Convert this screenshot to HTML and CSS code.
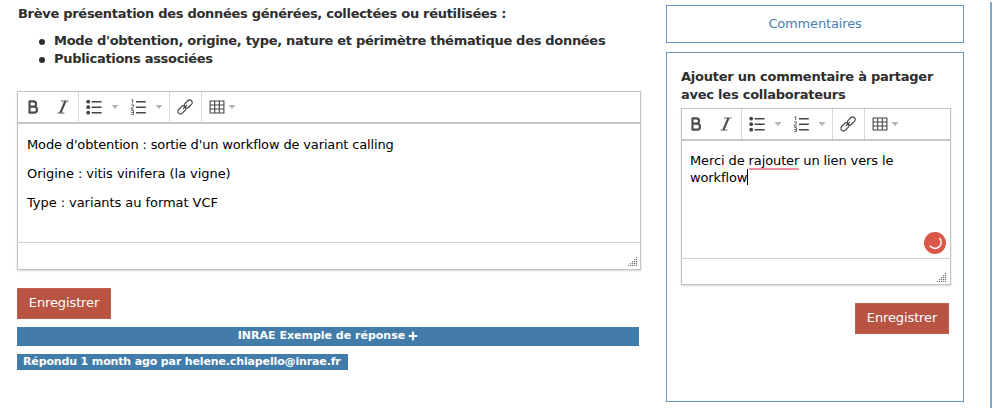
FILE: index.html
```
<!DOCTYPE html>
<html lang="fr">
<head>
<meta charset="utf-8">
<title>Plan de gestion de données</title>
<link rel="stylesheet" href="styles.css">
</head>
<body>
<svg width="0" height="0" class="defs">
  <defs>
    <symbol id="bold" viewBox="0 0 16 16"><path d="M4.5 1.4v13.2M4.5 2.4h4a2.6 2.6 0 0 1 0 5.2h-4M4.5 7.8h4.6a2.9 2.9 0 0 1 0 5.8H4.5" fill="none" stroke="#4a4a4a" stroke-width="2.1"/></symbol>
    <symbol id="italic" viewBox="0 0 16 16"><path d="M5.9 2h7.6M2.4 14h7" fill="none" stroke="#666" stroke-width="1"/><path d="M10.5 2L5.3 14" fill="none" stroke="#4a4a4a" stroke-width="2.1"/></symbol>
    <symbol id="bullets" viewBox="0 0 16 16"><g fill="#444"><circle cx="2.2" cy="2.7" r="1.9"/><circle cx="2.2" cy="8.2" r="1.9"/><circle cx="2.2" cy="13.7" r="1.9"/></g><path d="M5.6 2.7h10M5.6 8.2h10M5.6 13.7h10" stroke="#444" stroke-width="1.6"/></symbol>
    <symbol id="numbers" viewBox="0 0 16 16"><path d="M6 2.7h9.8M6 8.2h9.8M6 13.7h9.8" stroke="#444" stroke-width="1.6"/><path d="M1.5 1.2l1.2-.7v3.7M1.2 5.9h2.2v1.7l-2 1.3v1.2h2.4M1.2 11.6h2.3v3.8H1.2M1.4 13.5h2" fill="none" stroke="#555" stroke-width=".9"/></symbol>
    <symbol id="link" viewBox="0 0 16 16"><g fill="none" stroke="#444" stroke-width="1.2"><rect x="-4.6" y="-2.6" width="9.2" height="5.2" rx="2.6" transform="translate(4.9 10.9) rotate(-45)"/><rect x="-4.6" y="-2.6" width="9.2" height="5.2" rx="2.6" transform="translate(11.2 5) rotate(-45)"/><path d="M6 9.9l4-4"/></g></symbol>
    <symbol id="table" viewBox="0 0 16 16"><path d="M1.1 2h13.8v12H1.1zM1 6h14M1 10h14M5.7 2v12M10.3 2v12" fill="none" stroke="#444" stroke-width="1.1"/></symbol>
    <symbol id="caret" viewBox="0 0 8 4"><path d="M.5 0h7L4 4z" fill="#b0b6ba"/></symbol>
    <symbol id="grip" viewBox="0 0 10 10"><path d="M8.5 1v9M6.5 3v7M4.5 5v5M2.5 7v3M.5 9v1" fill="none" stroke="#777" stroke-width="1.2" stroke-dasharray="1.2 .8"/></symbol>
  </defs>
</svg>
<div class="page">
  <main class="answer">
    <p class="question">Brève présentation des données générées, collectées ou réutilisées :</p>
    <ul class="points">
      <li>Mode d'obtention, origine, type, nature et périmètre thématique des données</li>
      <li>Publications associées</li>
    </ul>
    <div class="editor">
      <div class="toolbar">
        <div class="group g1"><svg class="icon"><use href="#bold"/></svg><svg class="icon"><use href="#italic"/></svg></div>
        <div class="group g2"><svg class="icon"><use href="#bullets"/></svg><svg class="caret"><use href="#caret"/></svg><svg class="icon"><use href="#numbers"/></svg><svg class="caret"><use href="#caret"/></svg></div>
        <div class="group g3"><svg class="icon"><use href="#link"/></svg></div>
        <div class="group g4"><svg class="icon"><use href="#table"/></svg><svg class="caret"><use href="#caret"/></svg></div>
      </div>
      <div class="content">
        <p class="first">Mode d'obtention : sortie d'un workflow de variant calling</p>
        <p>Origine : vitis vinifera (la vigne)</p>
        <p>Type : variants au format VCF</p>
      </div>
      <div class="status"><svg class="grip"><use href="#grip"/></svg></div>
    </div>
    <button class="save">Enregistrer</button>
    <div class="example"><span>INRAE Exemple de réponse</span><svg class="plus" viewBox="0 0 10 10"><path d="M5 .8v8.4M.8 5h8.4" stroke="#fff" stroke-width="2.2"/></svg></div>
    <div class="answered">Répondu 1 month ago par helene.chiapello@inrae.fr</div>
  </main>
  <aside class="side">
    <div class="tab">Commentaires</div>
    <section class="panel">
      <h2>Ajouter un commentaire à partager<br>avec les collaborateurs</h2>
      <div class="editor small">
        <div class="toolbar">
          <div class="group g1"><svg class="icon"><use href="#bold"/></svg><svg class="icon"><use href="#italic"/></svg></div>
          <div class="group g2"><svg class="icon"><use href="#bullets"/></svg><svg class="caret"><use href="#caret"/></svg><svg class="icon"><use href="#numbers"/></svg><svg class="caret"><use href="#caret"/></svg></div>
          <div class="group g3"><svg class="icon"><use href="#link"/></svg></div>
          <div class="group g4"><svg class="icon"><use href="#table"/></svg><svg class="caret"><use href="#caret"/></svg></div>
        </div>
        <div class="content">
          <p>Merci de <span class="typo">rajouter</span> un lien vers le<br>workflow<i class="cursor"></i></p>
          <svg class="checker" viewBox="0 0 22 22"><circle cx="11" cy="11" r="11" fill="#db574a"/><path d="M15.9 6.5A6 6 0 0 1 6.2 14" fill="none" stroke="#fff" stroke-width="1.5" stroke-linecap="round"/></svg>
        </div>
        <div class="status"><svg class="grip"><use href="#grip"/></svg></div>
      </div>
      <button class="save">Enregistrer</button>
    </section>
  </aside>
  <div class="rule"></div>
</div>
</body>
</html>
```
FILE: styles.css
```
* { box-sizing: border-box; }
body { margin: 0; height: 408px; overflow: hidden; background: #fff; color: #2e2e2e; font: 13px/18px Verdana, "DejaVu Sans", sans-serif; }
.defs { display: block; }
svg { display: block; flex: none; }
p, ul, h2 { margin: 0; padding: 0; }
.page { display: grid; grid-template-columns: 624px 349px 2px; padding-left: 17px; height: 408px; }
.side { margin-left: 25px; width: 298px; }
.rule { background: #7fa8ca; margin-top: 2px; }
.answer { display: flex; flex-direction: column; align-items: flex-start; }
.question { font-weight: bold; padding: 5px 0 0 1px; white-space: nowrap; letter-spacing: -.29px; }
.points { list-style: none; margin-top: 9px; font-weight: bold; white-space: nowrap; letter-spacing: -.3px; }
.points li { display: flex; align-items: center; height: 18px; }
.points li::before { content: ""; width: 6px; height: 6px; border-radius: 50%; background: #2e2e2e; margin: 1px 9px 0 22px; }
.editor { display: flex; flex-direction: column; width: 624px; height: 179px; margin-top: 23px; border: 1px solid #c3c3c3; box-shadow: 0 1px 2px rgba(0,0,0,.18); background: #fff; }
.toolbar { display: flex; height: 32px; border-bottom: 2px solid #c6c6c6; }
.group { display: flex; align-items: center; border-right: 1px solid #d9d9d9; padding-left: 7px; }
.g1 { width: 61px; gap: 14px; }
.g2 { width: 91px; }
.g3 { width: 32px; padding-left: 7px; }
.g4 { border: 0; padding-left: 7px; }
.icon { width: 16px; height: 16px; }
.caret { width: 8px; height: 4px; }
.g2 .caret { margin: 0 11px 0 9px; }
.g4 .caret { margin-left: 3px; }
.content { flex: 1; padding: 12px 8px 0 9px; color: #000; position: relative; white-space: nowrap; letter-spacing: -.06px; }
.content p { margin-bottom: 11px; }
.content .first { letter-spacing: -.145px; }
.status { display: flex; justify-content: flex-end; align-items: flex-end; height: 27px; border-top: 1px solid #d0d0d0; padding: 0 2px 3px 0; }
.grip { width: 10px; height: 10px; }
.save { font: inherit; letter-spacing: -.12px; width: 94px; height: 31px; border: 1px solid #c1604e; background: #b85441; color: #fff; padding: 0 0 1px; margin-top: 18px; }
.example { display: flex; justify-content: center; align-items: center; gap: 3px; width: 622px; height: 19px; margin-top: 8px; padding-bottom: 2px; background: #427cab; color: #fff; font-weight: bold; font-size: 11px; }
.plus { width: 10px; height: 10px; }
.answered { width: 331px; height: 16px; margin-top: 8px; padding-left: 6px; line-height: 15px; background: #427cab; color: #fff; font-weight: bold; font-size: 11px; letter-spacing: -.14px; white-space: nowrap; }
.tab { height: 38px; margin-top: 5px; border: 1px solid #6598c3; display: flex; align-items: center; justify-content: center; color: #4a80ae; letter-spacing: -.16px; }
.panel { height: 350px; margin-top: 9px; border: 1px solid #6598c3; padding: 15px 14px 0 14px; display: flex; flex-direction: column; }
h2 { font-size: 13px; line-height: 18px; white-space: nowrap; letter-spacing: -.24px; }
.small { width: 270px; height: 177px; margin-top: 4px; }
.small .g1 { width: 60px; padding-left: 6px; }
.small .content { padding: 12px 8px 0 8px; letter-spacing: -.11px; }
.small .content p { line-height: 16px; }
.typo { border-bottom: 2px solid #f38ba0; }
.cursor { display: inline-block; width: 1px; height: 16px; background: #000; vertical-align: -3px; }
.checker { position: absolute; width: 22px; height: 22px; right: 4px; bottom: 4px; }
.small .status { height: 26px; padding: 0 3px 2px 0; }
.panel .save { align-self: flex-end; }
```
